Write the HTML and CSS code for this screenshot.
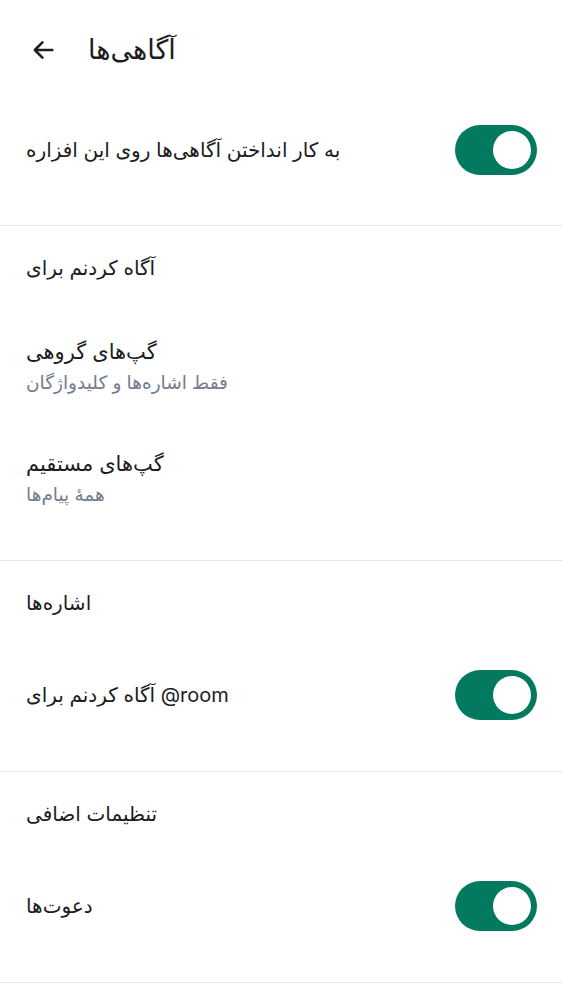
FILE: index.html
```html
<!DOCTYPE html>
<html lang="fa">
<head>
<meta charset="utf-8">
<link rel="stylesheet" href="styles.css">
</head>
<body>
<div class="page">
  <header class="topbar">
    <svg class="back" width="28" height="28" viewBox="0 0 24 24" aria-hidden="true">
      <path d="M20 12H5M11.5 5.5L5 12l6.5 6.5" fill="none" stroke="#1b1d22" stroke-width="2.2" stroke-linecap="round" stroke-linejoin="round"/>
    </svg>
    <h1 class="title">آگاهی‌ها</h1>
  </header>

  <section class="section first">
    <div class="row toggle-row">
      <span class="label">به کار انداختن آگاهی‌ها روی این افزاره</span>
      <span class="switch"><span class="knob"></span></span>
    </div>
  </section>

  <section class="section">
    <div class="sec-head">آگاه کردنم برای</div>
    <div class="item">
      <span class="label">گپ‌های گروهی</span>
      <span class="sub">فقط اشاره‌ها و کلیدواژگان</span>
    </div>
    <div class="item">
      <span class="label">گپ‌های مستقیم</span>
      <span class="sub">همهٔ پیام‌ها</span>
    </div>
  </section>

  <section class="section">
    <div class="sec-head">اشاره‌ها</div>
    <div class="row toggle-row">
      <span class="label">آگاه کردنم برای @room</span>
      <span class="switch"><span class="knob"></span></span>
    </div>
  </section>

  <section class="section">
    <div class="sec-head">تنظیمات اضافی</div>
    <div class="row toggle-row">
      <span class="label">دعوت‌ها</span>
      <span class="switch"><span class="knob"></span></span>
    </div>
  </section>
</div>
</body>
</html>
```

FILE: styles.css
```css
* { box-sizing: border-box; }
html, body { margin: 0; padding: 0; background: #ffffff; }
body {
  font-family: Inter, "DejaVu Sans", "Noto Sans", sans-serif;
  color: #1b1d22;
}
.page { width: 562px; }
.topbar {
  height: 98px;
  display: flex;
  align-items: center;
  padding-left: 29px;
  gap: 31px;
}
.back { display: block; margin-top: 2px; }
.title {
  margin: 0;
  font-size: 27px;
  font-weight: 400;
}
.section {
  border-bottom: 1px solid #e3e8ee;
  padding-bottom: 26px;
}
.section.first { padding-bottom: 25px; padding-top: 2px; }
.sec-head {
  height: 84px;
  display: flex;
  align-items: center;
  padding-left: 26px;
  font-size: 20px;
}
.row {
  height: 100px;
  display: flex;
  align-items: center;
  justify-content: space-between;
  padding: 0 25px 0 26px;
}
.label { font-size: 20px; }
.item {
  height: 112px;
  display: flex;
  flex-direction: column;
  justify-content: center;
  padding-left: 26px;
}
.item .label { font-size: 21px; }
.item .sub {
  font-size: 18.5px;
  color: #737d8c;
  margin-top: 7px;
}
.switch {
  width: 82px;
  height: 50px;
  border-radius: 25px;
  background: #037a5f;
  display: flex;
  align-items: center;
  justify-content: flex-end;
  padding-right: 6px;
  flex-shrink: 0;
}
.knob {
  width: 38px;
  height: 38px;
  border-radius: 50%;
  background: #ffffff;
}
```
